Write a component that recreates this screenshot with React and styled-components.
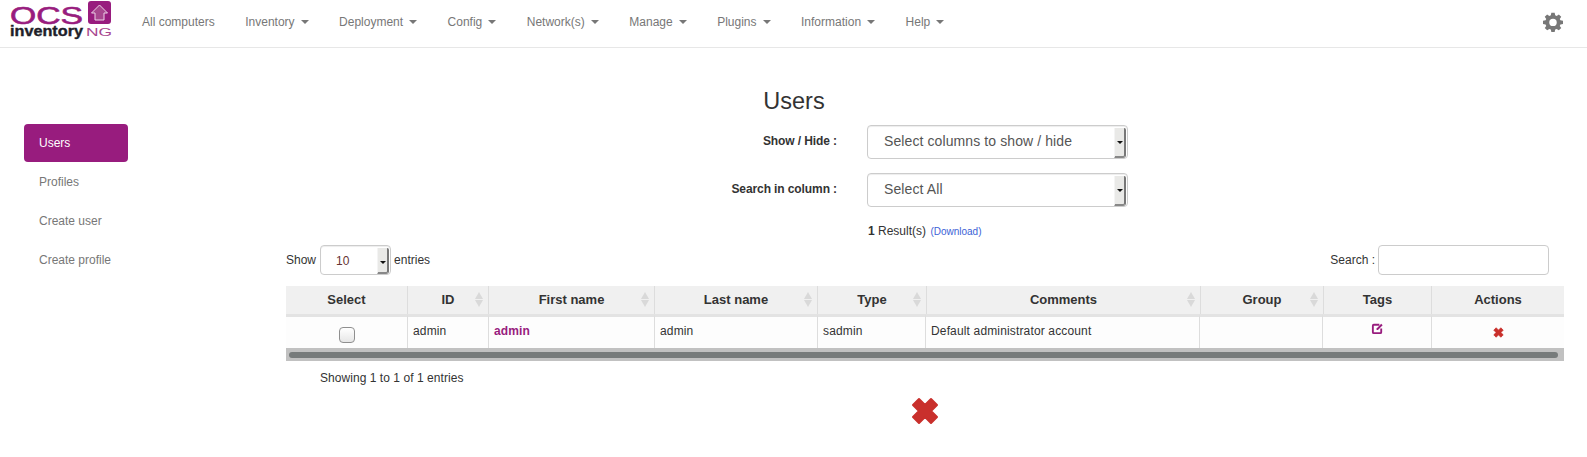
import React from "react";
import styled, { createGlobalStyle } from "styled-components";

const GlobalStyle = createGlobalStyle`
  * { box-sizing: border-box; }
  html, body { margin: 0; padding: 0; background: #fff; }
  body {
    font-family: "Liberation Sans", Arial, sans-serif;
    font-size: 12px;
    color: #333;
  }
`;

const PURPLE = "#981c7e";

const Navbar = styled.nav`
  display: flex;
  align-items: center;
  height: 48px;
  border-bottom: 1px solid #e7e7e7;
  padding: 0 0 4px 9px;
`;

const Logo = styled.svg`
  width: 106px;
  height: 41px;
  flex: none;
  align-self: flex-start;
`;

const NavItems = styled.ul`
  display: flex;
  list-style: none;
  margin: 0 0 0 27px;
  padding: 0;
  flex: 1;
`;

const NavItem = styled.li`
  font-size: 12px;
  color: #777;
  margin-right: 30.5px;
  display: flex;
  align-items: center;
  white-space: nowrap;
`;

const Caret = styled.span`
  display: inline-block;
  width: 0;
  height: 0;
  margin-left: 6px;
  border-top: 4px solid #777;
  border-left: 4px solid transparent;
  border-right: 4px solid transparent;
`;

const GearWrap = styled.div`
  width: 20px;
  height: 20px;
  margin-right: 24px;
`;

const Page = styled.div`
  display: flex;
  align-items: flex-start;
`;

const Sidebar = styled.ul`
  width: 286px;
  flex: none;
  list-style: none;
  margin: 76px 0 0 0;
  padding: 0 0 0 24px;
`;

const SideItem = styled.li`
  width: 104px;
  height: 38px;
  margin-bottom: 1px;
  padding-left: 15px;
  display: flex;
  align-items: center;
  font-size: 12px;
  border-radius: 4px;
  color: ${(p) => (p.$active ? "#fff" : "#777")};
  background: ${(p) => (p.$active ? PURPLE : "transparent")};
`;

const Main = styled.main`
  width: 1278px;
  flex: none;
`;

const Title = styled.h3`
  margin: 39px 0 0 0;
  height: 38px;
  padding-right: 262px;
  font-size: 23.5px;
  font-weight: 400;
  line-height: 28px;
  text-align: center;
  color: #333;
`;

const FormRow = styled.div`
  display: flex;
  align-items: flex-start;
  height: 48px;
`;

const FormLabel = styled.label`
  width: 551px;
  flex: none;
  padding-top: 9px;
  font-size: 12px;
  font-weight: 700;
  letter-spacing: -0.1px;
  text-align: right;
  color: #333;
`;

const SelectBox = styled.div`
  position: relative;
  width: 261px;
  height: 34px;
  margin-left: 30px;
  border: 1px solid #ccc;
  border-radius: 4px;
  padding-left: 16px;
  font-size: 14px;
  letter-spacing: 0.1px;
  line-height: 31px;
  color: #555;
  box-shadow: inset 0 1px 1px rgba(0, 0, 0, 0.075);
`;

const SelectArrow = styled.span`
  position: absolute;
  top: 2px;
  right: 1px;
  bottom: 0;
  width: 12px;
  background: #e9e9e7;
  border-right: 2px solid #777;
  border-bottom: 2px solid #888;
  border-left: 1px solid #f4f4f4;
  border-radius: 0 2px 3px 0;
  &::after {
    content: "";
    position: absolute;
    left: 2px;
    top: 13px;
    border-top: 3px solid #111;
    border-left: 3px solid transparent;
    border-right: 3px solid transparent;
  }
`;

const ResultLine = styled.div`
  margin: 3px 0 0 582px;
  height: 14px;
  line-height: 14px;
  font-size: 12px;
  color: #333;
  b { font-weight: 700; }
`;

const Download = styled.a`
  font-size: 10px;
  color: #3c5fd6;
  margin-left: 1px;
`;

const TableTools = styled.div`
  display: flex;
  justify-content: space-between;
  align-items: center;
  height: 30px;
  margin-top: 7px;
  padding-right: 15px;
  font-size: 12px;
  color: #333;
`;

const LengthWrap = styled.div`
  display: flex;
  align-items: center;
  gap: 4px;
`;

const LengthSelect = styled(SelectBox)`
  width: 71px;
  height: 30px;
  margin: 0 -1px 0 0;
  padding-left: 15px;
  font-size: 12px;
  line-height: 30px;
  color: #663333;
`;

const SearchWrap = styled.div`
  display: flex;
  align-items: center;
  gap: 3px;
`;

const SearchInput = styled.input`
  width: 171px;
  height: 30px;
  border: 1px solid #ccc;
  border-radius: 4px;
  padding: 0 8px;
  outline: none;
`;

const GridTable = styled.table`
  width: 1278px;
  table-layout: fixed;
  border-collapse: separate;
  border-spacing: 0;
  font-size: 12px;
`;

const HeadTable = styled(GridTable)`
  margin-top: 11px;
`;

const Th = styled.th`
  position: relative;
  height: 28px;
  padding: 0 0 1px 0;
  background: #f0f0f0;
  border-right: 1px solid #ddd;
  font-size: 13px;
  font-weight: 700;
  color: #333;
  text-align: center;
  &:last-child { border-right: 0; }
`;

const Td = styled.td`
  height: 34px;
  padding: 5px 4px 0 5px;
  vertical-align: top;
  line-height: 18px;
  letter-spacing: 0.15px;
  background: #fdfdfd;
  border-top: 3px solid #e3e3e3;
  border-right: 1px solid #ddd;
  color: #333;
  text-align: ${(p) => (p.$center ? "center" : "left")};
  &:last-child { border-right: 0; }
`;

const AdminLink = styled.a`
  color: ${PURPLE};
  font-weight: 700;
`;

const SortMark = styled.span`
  position: absolute;
  right: 5px;
  top: 6px;
  display: flex;
  flex-direction: column;
  gap: 1px;
  &::before, &::after {
    content: "";
    width: 0;
    height: 0;
    border-left: 4px solid transparent;
    border-right: 4px solid transparent;
  }
  &::before { border-bottom: 7px solid #d9d9d9; }
  &::after { border-top: 7px solid #d9d9d9; }
`;

const FakeCheckbox = styled.span`
  display: block;
  width: 16px;
  height: 16px;
  margin: 5px auto 0;
  border: 1px solid #8f8f8f;
  border-radius: 4px;
  background: linear-gradient(#fff, #e6e6e6);
`;

const TagIcon = styled.svg`
  display: block;
  margin: 0 auto;
  width: 13px;
  height: 13px;
`;

const SmallX = styled.svg`
  display: block;
  margin: 5px auto 0;
  width: 11px;
  height: 11px;
`;

const ScrollTrack = styled.div`
  height: 13px;
  background: #c1c1c1;
  padding: 4px 0 3px 3px;
`;

const ScrollThumb = styled.div`
  height: 6px;
  width: 1269px;
  border-radius: 3px;
  background: #777b7b;
`;

const Info = styled.div`
  margin: 9px 0 0 34px;
  height: 16px;
  line-height: 16px;
  font-size: 12px;
  letter-spacing: 0.05px;
  color: #333;
`;

const DeleteBar = styled.div`
  display: flex;
  justify-content: center;
  margin-top: 11px;
  padding-right: 1px;
`;

const BigX = styled.svg`
  width: 28px;
  height: 28px;
`;

const CrossPath = () => (
  <polygon
    fill="#c9302c"
    stroke="#c9302c"
    strokeWidth="2"
    strokeLinejoin="round"
    points="14,8 20,2 26,8 20,14 26,20 20,26 14,20 8,26 2,20 8,14 2,8 8,2"
  />
);

const headWidths = [122, 81, 166, 163, 109, 274, 123, 108, 132];
const bodyWidths = [122, 81, 166, 163, 108, 274, 123, 109, 132];

const columns = [
  { label: "Select" },
  { label: "ID", sortable: true },
  { label: "First name", sortable: true },
  { label: "Last name", sortable: true },
  { label: "Type", sortable: true },
  { label: "Comments", sortable: true },
  { label: "Group", sortable: true },
  { label: "Tags" },
  { label: "Actions" },
];

const navLinks = ["Inventory", "Deployment", "Config", "Network(s)", "Manage", "Plugins", "Information", "Help"];

function OcsLogo() {
  return (
    <Logo viewBox="0 0 106 41">
      <text x="1" y="24" fontFamily="Liberation Sans" fontSize="24" fill={PURPLE} stroke={PURPLE} strokeWidth="0.6" textLength="73" lengthAdjust="spacingAndGlyphs">OCS</text>
      <rect x="79" y="1" width="23" height="23" rx="3" fill={PURPLE} />
      <path d="M90.5 5 L98.5 13 H95 V20 H86 V13 H82.5 Z" fill="#a8478f" stroke="#ecd3e6" strokeWidth="1" />
      <text x="1" y="36" fontFamily="Liberation Sans" fontSize="15" fontWeight="700" fill="#1f1f2a" stroke="#1f1f2a" strokeWidth="0.4" textLength="73" lengthAdjust="spacingAndGlyphs">inventory</text>
      <text x="77" y="36" fontFamily="Liberation Sans" fontSize="11" fill="#a8478f" textLength="26" lengthAdjust="spacingAndGlyphs">NG</text>
    </Logo>
  );
}

export default function App() {
  return (
    <>
      <GlobalStyle />
      <Navbar>
        <OcsLogo />
        <NavItems>
          <NavItem>All computers</NavItem>
          {navLinks.map((name) => (
            <NavItem key={name}>
              {name}
              <Caret />
            </NavItem>
          ))}
        </NavItems>
        <GearWrap>
          <svg width="20" height="20" viewBox="0 0 24 24">
            <path
              fill="#777"
              fillRule="evenodd"
              d="M10 1h4l.6 3.1 1.8.8L19 3.1 21.9 6l-1.8 2.6.8 1.8L24 11v4l-3.1.6-.8 1.8 1.8 2.6L19 22.9l-2.6-1.8-1.8.8L14 25h-4l-.6-3.1-1.8-.8L5 22.9 2.1 20l1.8-2.6-.8-1.8L0 15v-4l3.1-.6.8-1.8L2.1 6 5 3.1l2.6 1.8 1.8-.8L10 1zm2 7.5a4.5 4.5 0 1 0 0 9 4.5 4.5 0 0 0 0-9z"
              transform="scale(1 .96)"
            />
          </svg>
        </GearWrap>
      </Navbar>
      <Page>
        <Sidebar>
          <SideItem $active>Users</SideItem>
          <SideItem>Profiles</SideItem>
          <SideItem>Create user</SideItem>
          <SideItem>Create profile</SideItem>
        </Sidebar>
        <Main>
          <Title>Users</Title>
          <FormRow>
            <FormLabel>Show / Hide :</FormLabel>
            <SelectBox>Select columns to show / hide<SelectArrow /></SelectBox>
          </FormRow>
          <FormRow>
            <FormLabel>Search in column :</FormLabel>
            <SelectBox>Select All<SelectArrow /></SelectBox>
          </FormRow>
          <ResultLine>
            <b>1</b> Result(s) <Download>(Download)</Download>
          </ResultLine>
          <TableTools>
            <LengthWrap>
              Show
              <LengthSelect>10<SelectArrow /></LengthSelect>
              entries
            </LengthWrap>
            <SearchWrap>
              Search :
              <SearchInput />
            </SearchWrap>
          </TableTools>
          <HeadTable>
            <colgroup>
              {headWidths.map((w, i) => <col key={i} width={w} />)}
            </colgroup>
            <thead>
              <tr>
                {columns.map((c) => (
                  <Th key={c.label}>
                    {c.label}
                    {c.sortable && <SortMark />}
                  </Th>
                ))}
              </tr>
            </thead>
          </HeadTable>
          <GridTable>
            <colgroup>
              {bodyWidths.map((w, i) => <col key={i} width={w} />)}
            </colgroup>
            <tbody>
              <tr>
                <Td $center><FakeCheckbox /></Td>
                <Td>admin</Td>
                <Td><AdminLink>admin</AdminLink></Td>
                <Td>admin</Td>
                <Td>sadmin</Td>
                <Td>Default administrator account</Td>
                <Td />
                <Td $center>
                  <TagIcon viewBox="0 0 14 14">
                    <path d="M9 3H3a1 1 0 0 0-1 1v7a1 1 0 0 0 1 1h7a1 1 0 0 0 1-1V7" fill="none" stroke={PURPLE} strokeWidth="2" />
                    <path d="M6 8.5V7l5-5 1.5 1.5-5 5z" fill={PURPLE} />
                  </TagIcon>
                </Td>
                <Td $center>
                  <SmallX viewBox="0 0 28 28"><CrossPath /></SmallX>
                </Td>
              </tr>
            </tbody>
          </GridTable>
          <ScrollTrack><ScrollThumb /></ScrollTrack>
          <Info>Showing 1 to 1 of 1 entries</Info>
          <DeleteBar>
            <BigX viewBox="0 0 28 28"><CrossPath /></BigX>
          </DeleteBar>
        </Main>
      </Page>
    </>
  );
}
